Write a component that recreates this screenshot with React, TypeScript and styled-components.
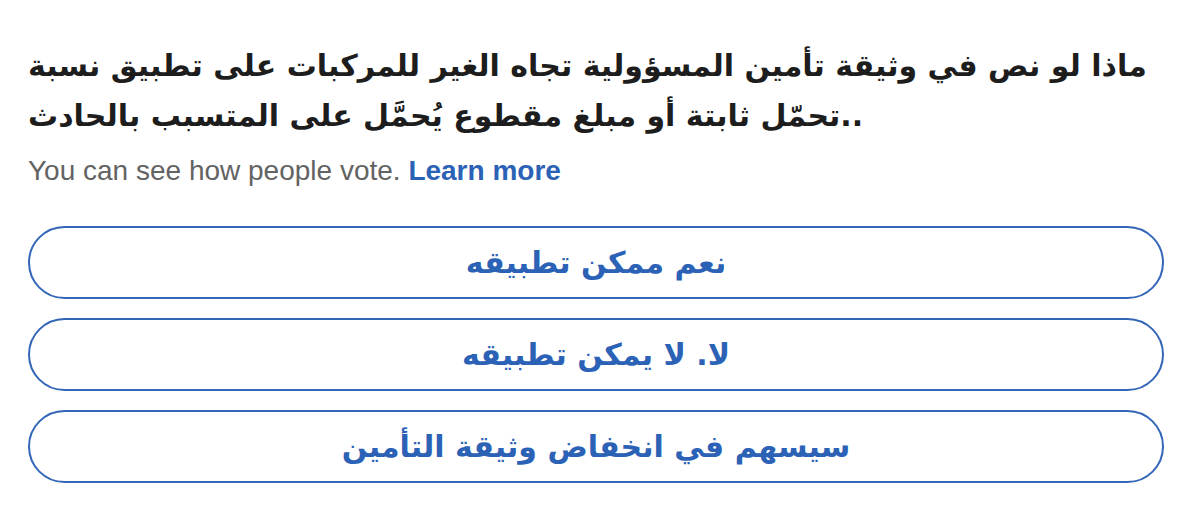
import React from 'react';
import styled, { createGlobalStyle } from 'styled-components';

const GlobalStyle = createGlobalStyle`
  html, body {
    margin: 0;
    padding: 0;
    background: #ffffff;
  }
`;

const PollCard = styled.div`
  width: 1200px;
  height: 513px;
  box-sizing: border-box;
  padding: 41px 36px 0 28px;
  background: #ffffff;
`;

const Question = styled.p`
  margin: 0;
  direction: ltr;
  text-align: left;
  font-family: "DejaVu Sans", "Noto Sans", sans-serif;
  font-weight: 700;
  font-size: 30px;
  line-height: 50px;
  color: #1d1d1d;
`;

const Notice = styled.p`
  margin: 12px 0 0;
  font-family: "Liberation Sans", Arial, sans-serif;
  font-size: 28px;
  line-height: 36px;
  color: #636363;
`;

const LearnMore = styled.a`
  color: #2c62b6;
  font-weight: 700;
  text-decoration: none;
`;

const Options = styled.div`
  display: flex;
  flex-direction: column;
  gap: 19px;
  margin-top: 37px;
`;

const OptionButton = styled.button`
  display: flex;
  align-items: center;
  justify-content: center;
  width: 100%;
  height: 73px;
  box-sizing: border-box;
  border: 2.5px solid #3466b8;
  border-radius: 37px;
  background: #ffffff;
  font-family: "DejaVu Sans", "Noto Sans", sans-serif;
  font-weight: 700;
  font-size: 30px;
  color: #2c62b6;
  cursor: pointer;
`;

const options = [
  'نعم ممكن تطبيقه',
  'لا. لا يمكن تطبيقه',
  'سيسهم في انخفاض وثيقة التأمين',
];

const App: React.FC = () => {
  return (
    <>
      <GlobalStyle />
      <PollCard>
        <Question>
          ماذا لو نص في وثيقة تأمين المسؤولية تجاه الغير للمركبات على تطبيق نسبة
          تحمّل ثابتة أو مبلغ مقطوع يُحمَّل على المتسبب بالحادث..
        </Question>
        <Notice>
          You can see how people vote. <LearnMore href="#">Learn more</LearnMore>
        </Notice>
        <Options>
          {options.map((label) => (
            <OptionButton key={label} dir="rtl">
              {label}
            </OptionButton>
          ))}
        </Options>
      </PollCard>
    </>
  );
};

export default App;
